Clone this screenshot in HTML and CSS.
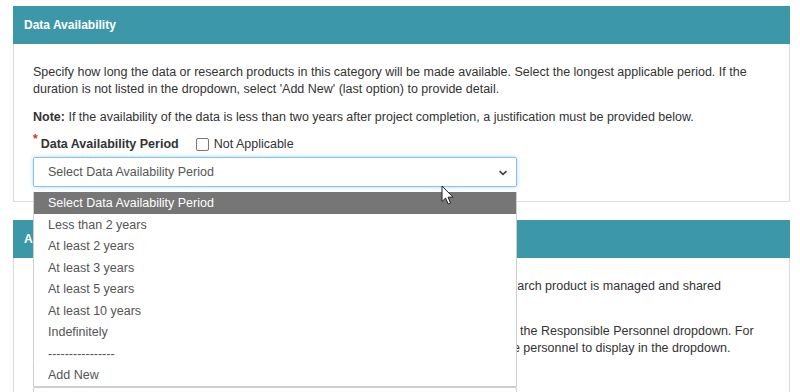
FILE: index.html
```html
<!DOCTYPE html>
<html lang="en">
<head>
    <meta charset="UTF-8">
    <meta name="viewport" content="width=device-width, initial-scale=1.0">
    <title>Data Management Plan - Data Availability</title>
    <link rel="stylesheet" href="styles.css">
</head>
<body>
    <div class="page">
        <section class="panel">
            <div class="panel-heading">Data Availability</div>
            <div class="panel-body">
                <p>Specify how long the data or research products in this category will be made available. Select the longest applicable period. If the duration is not listed in the dropdown, select 'Add New' (last option) to provide detail.</p>
                <p><strong>Note:</strong> If the availability of the data is less than two years after project completion, a justification must be provided below.</p>

                <div class="field">
                    <div class="label-row">
                        <span class="req">*</span>
                        <label class="field-label" for="availability">Data Availability Period</label>
                        <label class="check"><span class="check-box"></span>Not Applicable</label>
                    </div>
                    <div class="select-wrap">
                        <div class="select is-open" id="availability">
                            <span>Select Data Availability Period</span>
                            <svg class="chevron" width="10" height="6" viewBox="0 0 10 6"><path d="M1.5 1.2l3.5 3.2 3.5-3.2" fill="none" stroke="#444" stroke-width="1.7"/></svg>
                        </div>

                        <!-- open dropdown list -->
                        <ul class="dropdown">
                            <li class="selected">Select Data Availability Period</li>
                            <li>Less than 2 years</li>
                            <li>At least 2 years</li>
                            <li>At least 3 years</li>
                            <li>At least 5 years</li>
                            <li>At least 10 years</li>
                            <li>Indefinitely</li>
                            <li>----------------</li>
                            <li>Add New</li>
                        </ul>

                        <svg class="cursor" width="13" height="20" viewBox="0 0 13 20"><path d="M1 1v15.5l3.6-3.4 2.6 5.9 2.4-1-2.6-5.8h5z" fill="#fff" stroke="#222" stroke-width="1" stroke-linejoin="round"/></svg>
                    </div>
                </div>
            </div>
        </section>

        <section class="panel">
            <div class="panel-heading">Accountability</div>
            <div class="panel-body">
                <p>Identify the individual who will be responsible for ensuring that the resulting data or research product is managed and shared according to the plan.</p>
                <p>Select the person who is responsible for this data or research product, and then choose the Responsible Personnel dropdown. For new staff members, add them on the Key Personnel section first for the new responsible personnel to display in the dropdown.</p>

                <div class="field">
                    <div class="label-row">
                        <span class="req">*</span>
                        <label class="field-label" for="personnel">Responsible Personnel</label>
                    </div>
                    <div class="select" id="personnel">
                        <span>Select Responsible Personnel</span>
                        <svg class="chevron" width="10" height="6" viewBox="0 0 10 6"><path d="M1.5 1.2l3.5 3.2 3.5-3.2" fill="none" stroke="#444" stroke-width="1.7"/></svg>
                    </div>
                </div>
            </div>
        </section>
    </div>
</body>
</html>
```

FILE: styles.css
```css
* {
    margin: 0;
    padding: 0;
    box-sizing: border-box;
}

body {
    font-family: "Liberation Sans", Arial, sans-serif;
    font-size: 12.5px;
    line-height: 17px;
    color: #333;
    background-color: #fff;
    overflow: hidden;
}

.page {
    padding: 6px 10px 0 13px;
}

.panel {
    border: 1px solid #dcdcdc;
    margin-bottom: 18px;
    background-color: #fff;
}

.panel-heading {
    margin: -1px -1px 0;
    height: 38px;
    padding: 10px 11px;
    background-color: #3c97a9;
    color: #fff;
    font-size: 12px;
    font-weight: bold;
    line-height: 18px;
}

.panel-body {
    padding: 20px 19px 14px;
}

.panel-body p {
    margin-bottom: 11px;
}

.label-row {
    display: flex;
    align-items: center;
    margin-top: -2px;
    margin-bottom: 4px;
}

.req {
    color: #d9302c;
    font-weight: bold;
    font-size: 12px;
    align-self: flex-start;
    line-height: 8px;
    margin-right: 3px;
}

.field-label {
    font-weight: bold;
    margin-right: 17px;
}

.check {
    display: flex;
    align-items: center;
    gap: 5px;
    margin-top: 1px;
}

.check-box {
    width: 13px;
    height: 13px;
    border: 1px solid #767676;
    border-radius: 2px;
    background-color: #fff;
}

.select-wrap {
    position: relative;
    width: 484px;
}

.select {
    width: 484px;
    height: 30px;
    display: flex;
    align-items: center;
    justify-content: space-between;
    padding: 0 8px 0 14px;
    border: 1px solid #ccc;
    border-radius: 2px;
    color: #555;
    background-color: #fff;
}

.select.is-open {
    border-color: #8cc0ea;
    box-shadow: 0 0 4px rgba(102, 175, 233, 0.5);
}

.chevron {
    margin-top: 1px;
}

.dropdown {
    position: absolute;
    top: 35px;
    left: 0;
    width: 484px;
    list-style: none;
    background-color: #fff;
    border: 1px solid #cfcfcf;
    border-top: none;
    color: #555;
    z-index: 10;
}

.dropdown li {
    height: 21.5px;
    padding: 2px 0 0 14px;
    line-height: 19.5px;
}

.dropdown li.selected {
    background-color: #767676;
    color: #fff;
}

.cursor {
    position: absolute;
    top: 28px;
    left: 408px;
    z-index: 20;
}
```
